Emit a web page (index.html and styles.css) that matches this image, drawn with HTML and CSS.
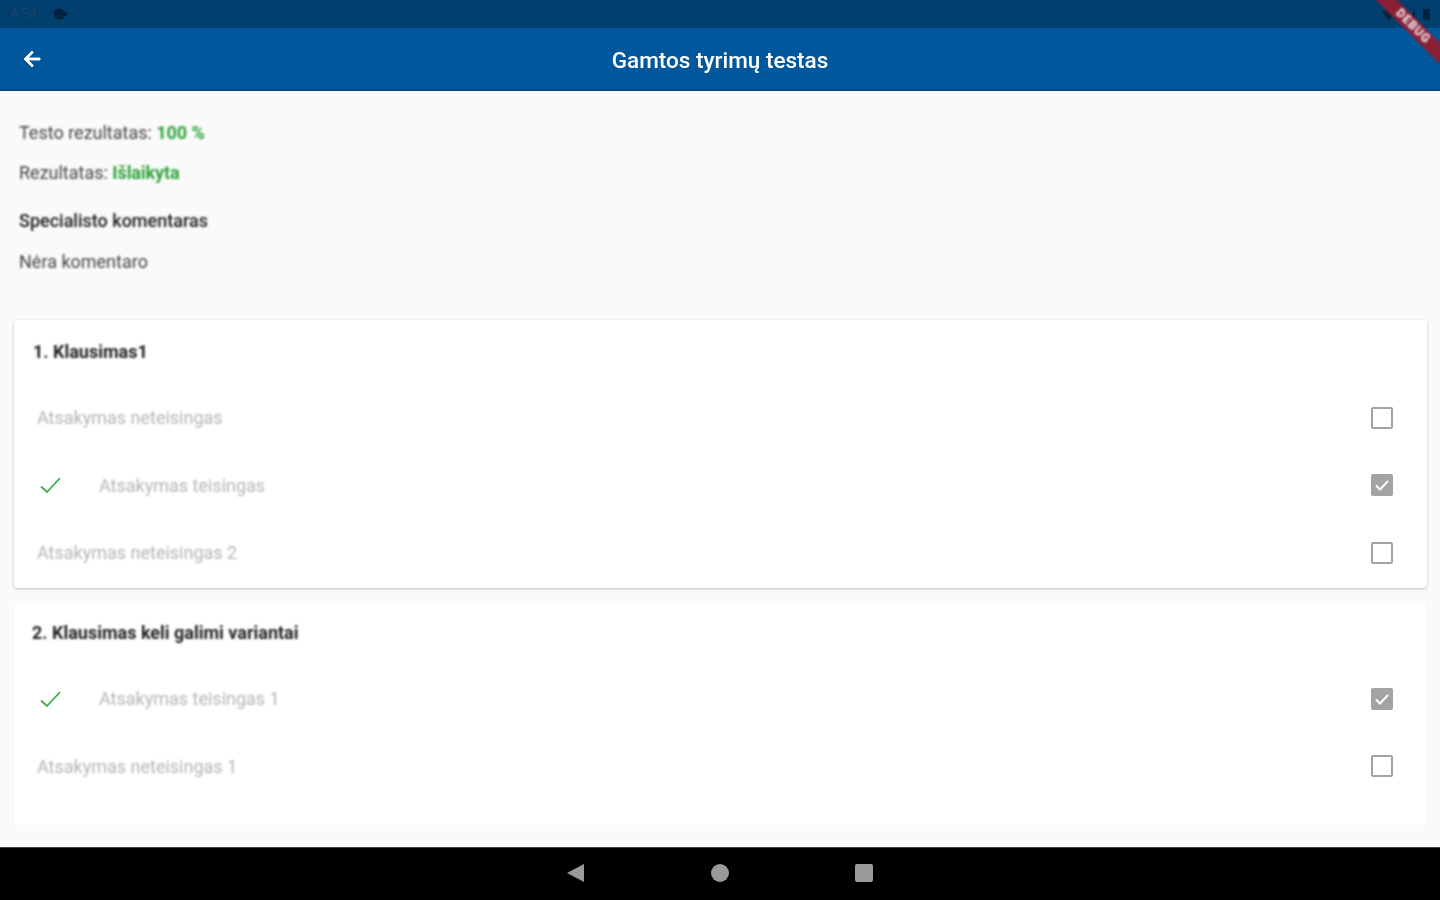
FILE: index.html
```html
<!DOCTYPE html>
<html lang="lt">
<head>
<meta charset="utf-8">
<title>Gamtos tyrimų testas</title>
<link rel="stylesheet" href="styles.css">
</head>
<body>
<div class="screen">
  <div class="statusbar">
    <span class="time">4:54</span>
    <svg class="status-icon" width="16" height="14" viewBox="0 0 16 14"><circle cx="6" cy="7" r="4" fill="#04233f" stroke="#04233f" stroke-width="3"/><path d="M9 2l6 5-6 5z" fill="#04233f"/></svg>
    <svg class="status-right" width="50" height="14" viewBox="0 0 50 14"><path d="M0 4q7-5 14 0l-7 8z" fill="#04233f"/><path d="M27 12l6-10v10z" fill="#04233f"/><rect x="41" y="1" width="7" height="11" fill="#04233f"/></svg>
  </div>
  <header class="appbar">
    <svg class="back" width="24" height="24" viewBox="0 0 24 24"><path d="M20 11H7.83l5.59-5.59L12 4l-8 8 8 8 1.41-1.41L7.83 13H20z" fill="#fff" stroke="#fff" stroke-width=".9"/></svg>
    <h1 class="title">Gamtos tyrimų testas</h1>
  </header>
  <main class="content">
    <section class="summary">
      <p class="line first">Testo rezultatas: <b class="ok">100 %</b></p>
      <p class="line second">Rezultatas: <b class="ok">Išlaikyta</b></p>
      <p class="heading">Specialisto komentaras</p>
      <p class="line comment">Nėra komentaro</p>
    </section>
    <section class="card card-one">
      <h2 class="question">1. Klausimas1</h2>
      <div class="answer">
        <span class="answer-text">Atsakymas neteisingas</span>
        <span class="box"></span>
      </div>
      <div class="answer">
        <svg class="tick" width="24" height="24" viewBox="0 0 24 24"><path d="M3 13.5l6 5.5L22 5" fill="none" stroke="#3dae48" stroke-width="1.8"/></svg>
        <span class="answer-text">Atsakymas teisingas</span>
        <span class="box checked"><svg width="22" height="22" viewBox="0 0 22 22"><path d="M5 11.5l4 4 8-8.5" fill="none" stroke="#fff" stroke-width="2"/></svg></span>
      </div>
      <div class="answer">
        <span class="answer-text">Atsakymas neteisingas 2</span>
        <span class="box"></span>
      </div>
    </section>
    <section class="card card-two">
      <h2 class="question">2. Klausimas keli galimi variantai</h2>
      <div class="answer">
        <svg class="tick" width="24" height="24" viewBox="0 0 24 24"><path d="M3 13.5l6 5.5L22 5" fill="none" stroke="#3dae48" stroke-width="1.8"/></svg>
        <span class="answer-text">Atsakymas teisingas 1</span>
        <span class="box checked"><svg width="22" height="22" viewBox="0 0 22 22"><path d="M5 11.5l4 4 8-8.5" fill="none" stroke="#fff" stroke-width="2"/></svg></span>
      </div>
      <div class="answer">
        <span class="answer-text">Atsakymas neteisingas 1</span>
        <span class="box"></span>
      </div>
    </section>
  </main>
  <nav class="navbar">
    <svg width="20" height="20" viewBox="0 0 20 20"><path d="M1 10L18 1v18z" fill="#9a9a9a"/></svg>
    <svg width="20" height="20" viewBox="0 0 20 20"><circle cx="10" cy="10" r="9" fill="#9a9a9a"/></svg>
    <svg width="20" height="20" viewBox="0 0 20 20"><rect x="1" y="1" width="18" height="18" rx="2" fill="#9a9a9a"/></svg>
  </nav>
  <div class="ribbon"><span>DEBUG</span></div>
</div>
</body>
</html>
```
FILE: styles.css
```css
* { box-sizing: border-box; }
html, body { margin: 0; height: 100%; }
body { font-family: Roboto, "Noto Sans", sans-serif; background: #fafafa; overflow: hidden; }
.screen { position: relative; width: 1440px; height: 900px; display: flex; flex-direction: column; overflow: hidden; }
.statusbar { height: 28px; background: #003f6e; display: flex; align-items: center; padding: 0 8px 0 10px; gap: 11px; flex: none; }
.time { font-size: 14px; color: #1d4468; filter: blur(.7px); width: 32px; }
.status-icon { filter: blur(.5px); }
.status-right { margin-left: auto; margin-top: 1px; filter: blur(.6px); }
.appbar { height: 63px; padding-top: 2px; background: #01579b; border-bottom: 2px solid #02478a; position: relative; display: flex; align-items: center; justify-content: center; flex: none; }
.back { position: absolute; left: 20px; top: 19px; filter: blur(.6px); }
.title { margin: 0; font-size: 22.5px; font-weight: 500; color: #fff; filter: blur(.7px); }
.content { flex: 1; min-height: 0; padding: 0 13px; }
.summary { height: 229px; padding: 32px 6px 0; }
.line, .heading { margin: 0; font-size: 18px; line-height: 20px; color: #444; filter: blur(.8px); }
.second { margin-top: 19.5px; }
.heading { margin-top: 28.5px; font-weight: 500; color: #1c1c1c; }
.comment { margin-top: 21px; }
.ok { color: #2fa33c; font-weight: 700; letter-spacing: -.1px; }
.card { background: #fff; border-radius: 4px; margin: 0 0 0 1px; width: 1413px; box-shadow: 0 1px 3px rgba(0,0,0,.25); padding: 0 18px; }
.card-one { height: 268px; }
.card-one .question { margin-left: 1px; padding-top: 22px; }
.card-two { height: 222px; margin-top: 15px; box-shadow: 1px 0 1px -1px rgba(0,0,0,.3), -1px 0 1px -1px rgba(0,0,0,.2); }
.question { margin: 0; height: 61px; padding-top: 20px; font-size: 18px; line-height: 20px; font-weight: 700; color: #222; filter: blur(.8px); }
.answer { height: 67.5px; display: flex; align-items: center; padding-left: 5px; padding-right: 16px; }
.answer:nth-child(2) { margin-top: 3px; }
.card-two .answer:nth-child(2) { margin-top: 1px; }
.answer-text { font-size: 18px; color: #b4b4b4; flex: 1; filter: blur(.8px); }
.tick { margin-left: 1px; margin-right: 37px; filter: blur(.3px); flex: none; }
.box { width: 22px; height: 22px; border: 2px solid #a3a3a3; border-radius: 2px; flex: none; filter: blur(.5px); }
.box.checked { background: #a3a3a3; border: 0; display: block; }
.box svg { display: block; }
.navbar { height: 53px; background: #000; border-top: 1px solid #444; display: flex; align-items: center; justify-content: center; gap: 124px; flex: none; }
.navbar svg { filter: blur(.5px); margin-top: -3px; }
.ribbon { position: absolute; top: 0; right: 0; width: 100px; height: 100px; overflow: hidden; pointer-events: none; }
.ribbon span { position: absolute; left: 8px; top: 19px; width: 130px; height: 15px; background: #8a1f35; color: #fff; font-size: 12px; font-weight: 700; letter-spacing: 1px; text-align: center; line-height: 15px; transform: rotate(45deg); filter: blur(.9px); }
```
